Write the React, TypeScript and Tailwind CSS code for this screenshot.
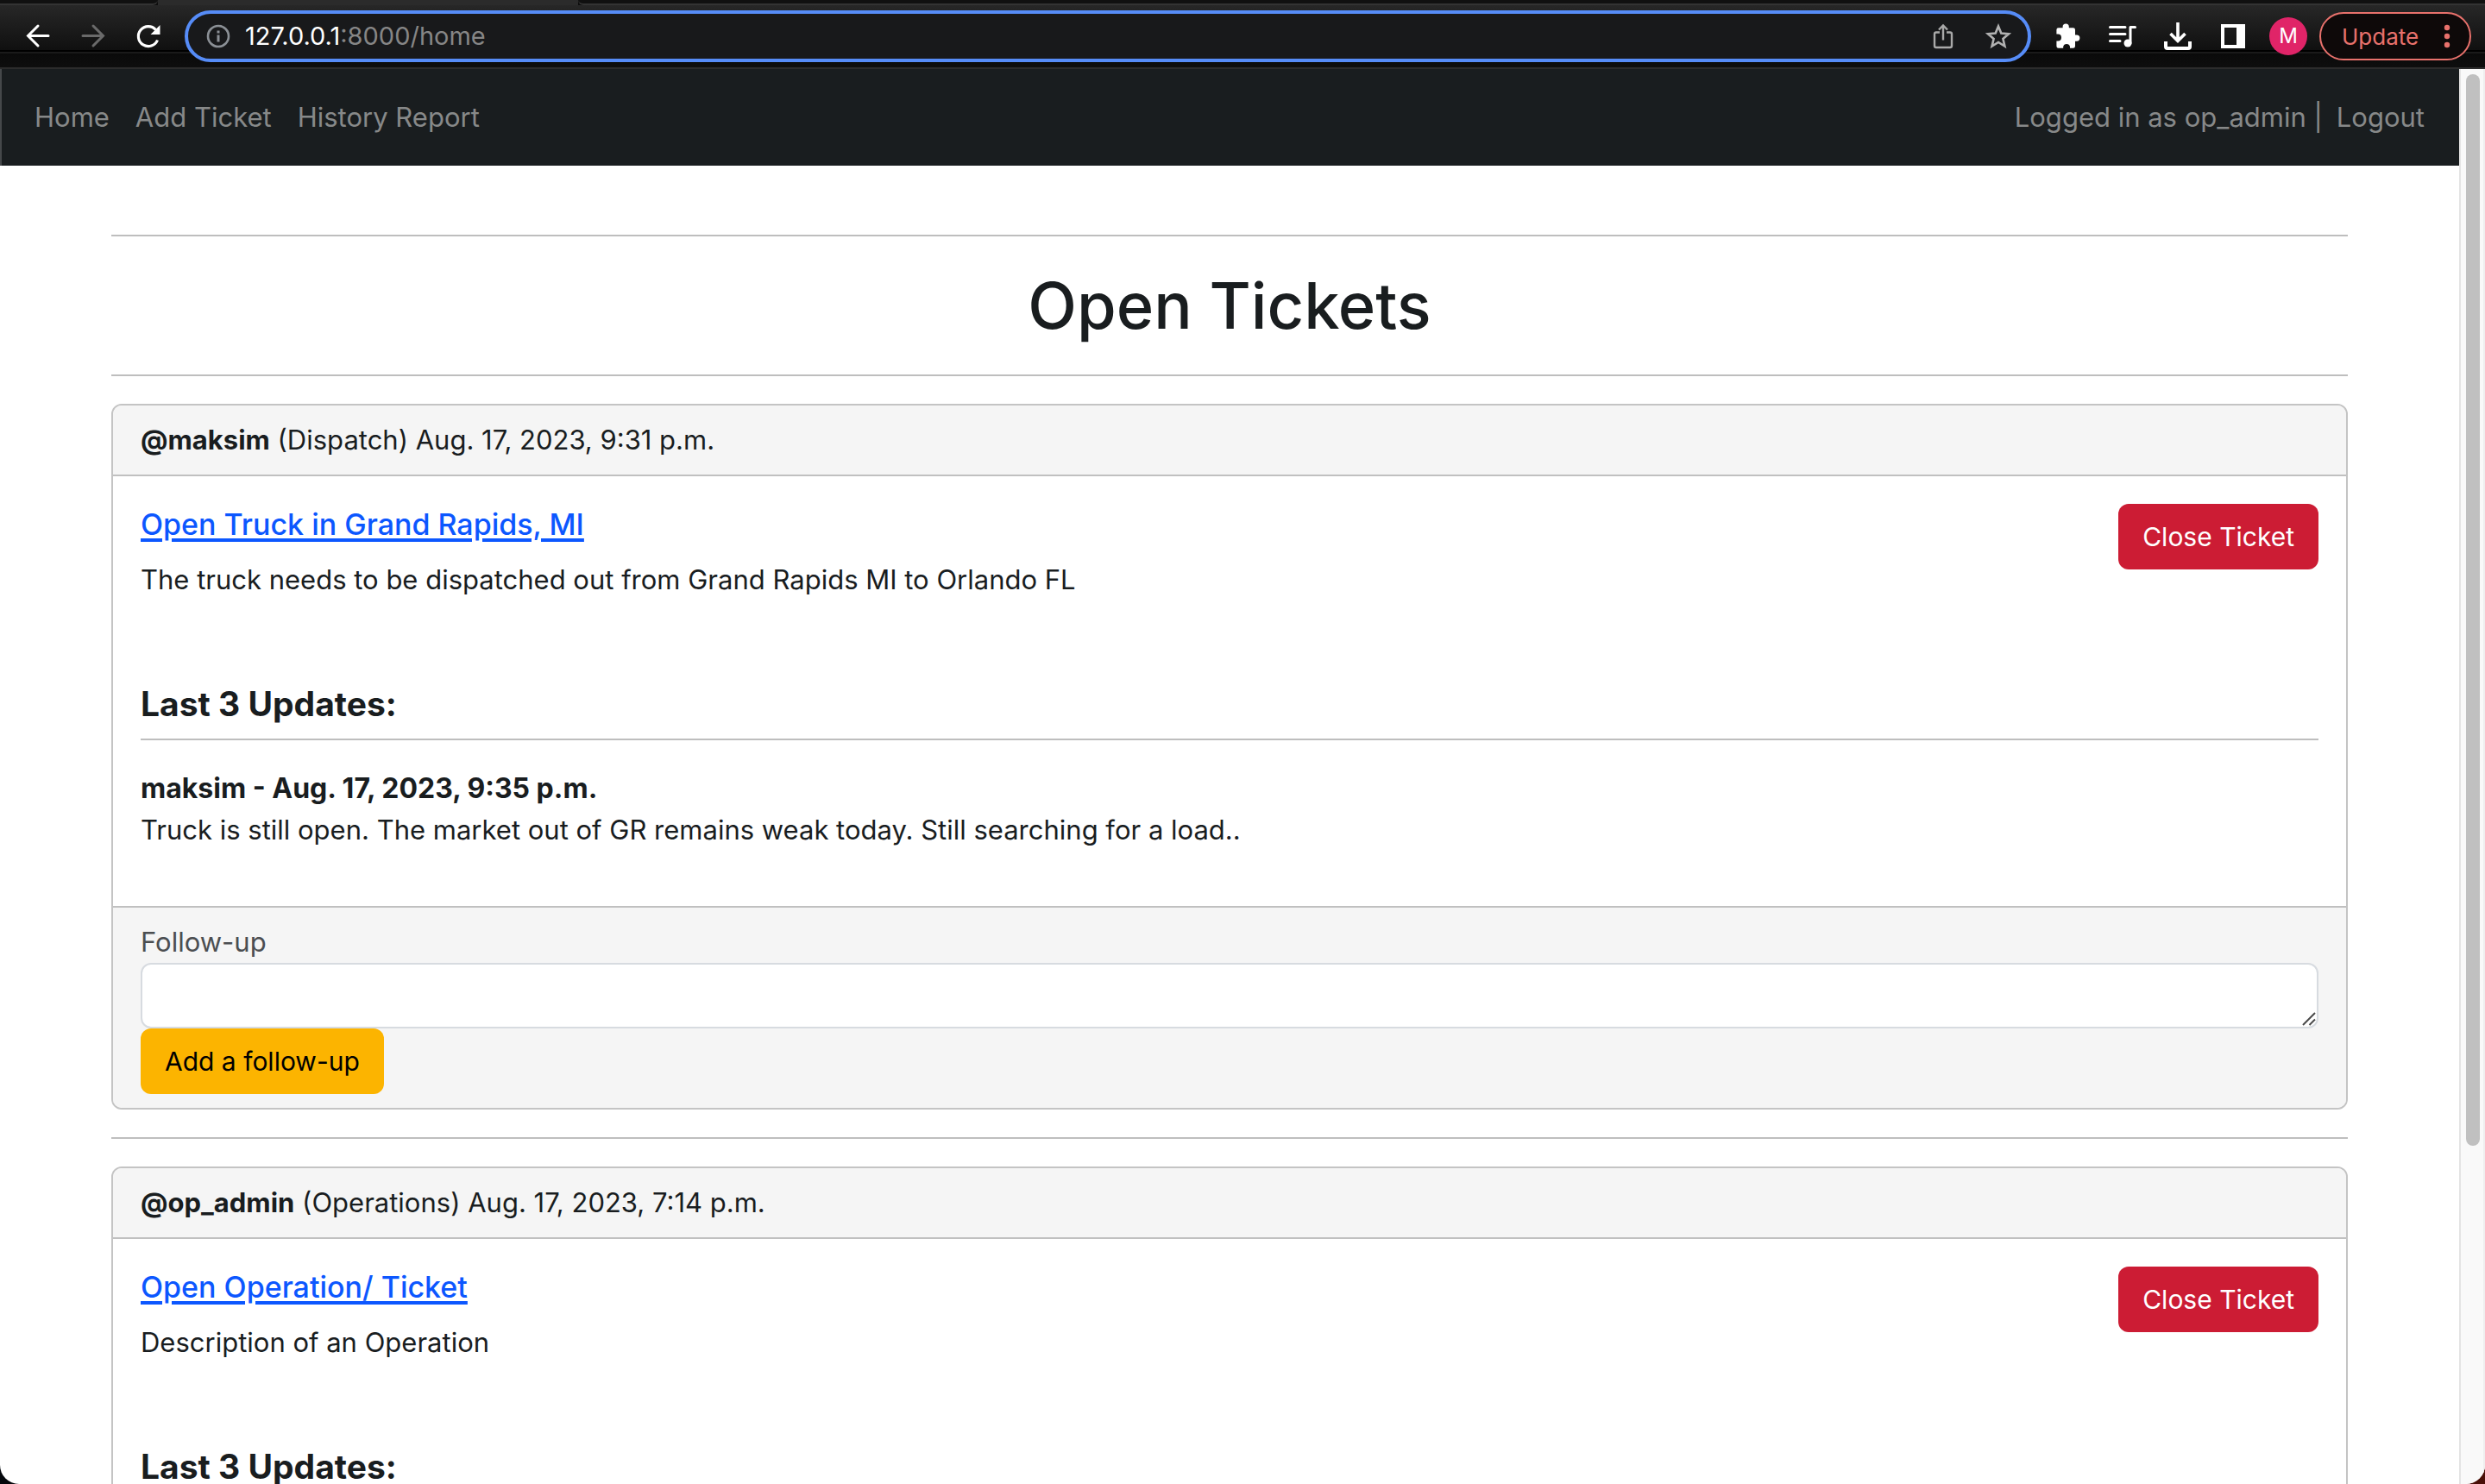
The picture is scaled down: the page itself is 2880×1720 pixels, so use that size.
import type { ReactNode } from 'react';

type Update = { author: string; date: string; text: string };
type Ticket = {
  id: number;
  user: string;
  department: string;
  date: string;
  title: string;
  description: string;
  updates: Update[];
};

const tickets: Ticket[] = [
  {
    id: 1,
    user: 'maksim',
    department: 'Dispatch',
    date: 'Aug. 17, 2023, 9:31 p.m.',
    title: 'Open Truck in Grand Rapids, MI',
    description: 'The truck needs to be dispatched out from Grand Rapids MI to Orlando FL',
    updates: [
      {
        author: 'maksim',
        date: 'Aug. 17, 2023, 9:35 p.m.',
        text: 'Truck is still open. The market out of GR remains weak today. Still searching for a load..',
      },
    ],
  },
  {
    id: 2,
    user: 'op_admin',
    department: 'Operations',
    date: 'Aug. 17, 2023, 7:14 p.m.',
    title: 'Open Operation/ Ticket',
    description: 'Description of an Operation',
    updates: [],
  },
];

function ToolButton({ label, className, children }: { label: string; className: string; children: ReactNode }) {
  return (
    <button type="button" aria-label={label} className={`flex h-11 w-16 shrink-0 items-center justify-center ${className}`}>
      <svg viewBox="0 0 32 32" className="h-8 w-8" fill="none" stroke="currentColor">
        {children}
      </svg>
    </button>
  );
}

function BrowserToolbar() {
  return (
    <header className="shrink-0 bg-[#0d0d0d]">
      <div className="flex h-[6px]">
        <div className="w-[183px] rounded-br-md border-b-2 border-[#333333] bg-[#101010]" />
        <div className="w-[487px] bg-[#2b2b2b]" />
        <div className="flex-1 rounded-bl-md border-b-2 border-[#333333] bg-[#101010]" />
      </div>
      <div className="flex h-[74px] items-center border-b-2 border-[#2c2c2c] bg-[linear-gradient(to_bottom,#272727_0px,#101010_52px,#000000_52px,#000000_54px,#1a1a1a_54px,#1a1a1a_56px,#0a0a0a_56px,#0e0e0e_72px)] pr-4 pl-3">
        <ToolButton label="Back" className="text-white">
          <path d="M28 15.5H5M16 4 4.500 15.500 16 27" strokeWidth="3" strokeLinecap="round" />
        </ToolButton>
        <ToolButton label="Forward" className="text-[#6a6a6a]">
          <path d="M4 15.500H27M16 4 27.500 15.500 16 27" strokeWidth="3" strokeLinecap="round" />
        </ToolButton>
        <ToolButton label="Reload" className="text-white">
          <path d="M26.500 20.500A11.500 11.500 0 1 1 24.500 8.500" strokeWidth="3.200" />
          <path d="M29.500 3V14H18.500Z" fill="currentColor" stroke="none" />
        </ToolButton>

        <div className="ml-[10px] flex h-[60px] flex-1 items-center rounded-full border-4 border-[#568cf7] bg-[#18191b] pr-[2px] pl-[19px]">
          <svg viewBox="0 0 32 32" className="h-8 w-8 shrink-0 text-[#8b9096]" fill="none" stroke="currentColor">
            <circle cx="16" cy="16" r="12" strokeWidth="2.600" />
            <path d="M16 14.500V22.500M16 9.500V12.500" strokeWidth="3" />
          </svg>
          <div className="ml-[15px] flex-1 text-[29px] leading-9 text-[#868686]">
            <span className="text-white">127.0.0.1</span>:8000/home
          </div>
          <ToolButton label="Share" className="text-[#a9a9a9]">
            <path d="M12 11.500H8Q6 11.500 6 13.500V27Q6 29 8 29H24Q26 29 26 27V13.500Q26 11.500 24 11.500H20" strokeWidth="2.400" />
            <path d="M16 20.500V4M11 8.500 16 3.500 21 8.500" strokeWidth="2.400" />
          </ToolButton>
          <ToolButton label="Bookmark" className="text-[#b2b2b2]">
            <path
              d="M16 4.500 19.300 12.600 28 13.300 21.400 19 23.400 27.500 16 23 8.600 27.500 10.600 19 4 13.300 12.700 12.600Z"
              strokeWidth="2.600"
            />
          </ToolButton>
        </div>

        <div className="ml-[10px] flex">
          <ToolButton label="Extensions" className="text-white">
            <path
              d="M26.800 14.500H25V8.500Q25 6.200 22.700 6.200H17.800V5A3.600 3.600 0 0 0 10.600 5V6.200H5.700Q3.400 6.200 3.400 8.500V13.500H5A4 4 0 0 1 5 21.500H3.400V27.500Q3.400 29.800 5.700 29.800H11.200V28A4 4 0 0 1 19 28V29.800H22.700Q25 29.800 25 27.500V21.700H26.800A3.600 3.600 0 0 0 26.800 14.500Z"
              fill="currentColor"
              stroke="none"
            />
          </ToolButton>
          <ToolButton label="Media controls" className="text-white">
            <path d="M1.500 5.500H19M1.500 13.500H19M1.500 21.500H13" strokeWidth="3" strokeLinecap="round" />
            <path d="M25 24V5.500H30.500" strokeWidth="3" strokeLinecap="round" strokeLinejoin="round" />
            <circle cx="22" cy="24" r="4.500" fill="currentColor" stroke="none" />
          </ToolButton>
          <ToolButton label="Downloads" className="text-white">
            <path d="M16 0V20M7.500 13 16 21.500 24.500 13" strokeWidth="3.600" />
            <path d="M2 22V28Q2 30 4 30H28Q30 30 30 28V22" strokeWidth="4" />
          </ToolButton>
          <ToolButton label="Side panel" className="text-white">
            <path d="M2 2H30V30H2ZM6 6V26H20V6Z" fill="currentColor" fillRule="evenodd" stroke="none" />
          </ToolButton>
        </div>
        <button
          type="button"
          aria-label="Profile M"
          className="ml-[10px] flex h-11 w-11 shrink-0 items-center justify-center rounded-full bg-[#e02468] text-[24px] text-white"
        >
          M
        </button>
        <button
          type="button"
          className="ml-[14px] flex h-14 w-44 shrink-0 items-center justify-between rounded-full border-2 border-[#e8716c] bg-[#0e0909] pr-[22px] pl-6 text-[26px] text-[#e8716c]"
        >
          Update
          <svg viewBox="0 0 8 28" className="h-7 w-2" fill="currentColor">
            <circle cx="4" cy="4" r="3.200" />
            <circle cx="4" cy="14" r="3.200" />
            <circle cx="4" cy="24" r="3.200" />
          </svg>
        </button>
      </div>
    </header>
  );
}

function Navbar() {
  return (
    <nav className="flex items-center justify-between border-l-2 border-[#45484a] bg-[#191d1f] py-8 pr-10 pl-[38px] text-[31px] leading-[48px] text-[#878989]">
      <div className="flex gap-[30px]">
        <a href="#home">Home</a>
        <a href="#add-ticket">Add Ticket</a>
        <a href="#history">History Report</a>
      </div>
      <div className="flex gap-4">
        <span>Logged in as op_admin |</span>
        <a href="#logout">Logout</a>
      </div>
    </nav>
  );
}

function TicketCard({ ticket }: { ticket: Ticket }) {
  const fieldId = `follow-up-${ticket.id}`;
  return (
    <article className="overflow-hidden rounded-xl border-2 border-[#c4c4c4]">
      <div className="border-b-2 border-[#c0c0c0] bg-[#f5f5f5] px-8 py-4">
        <strong>@{ticket.user}</strong> ({ticket.department}) {ticket.date}
      </div>
      <div className="p-8">
        <div className="flex items-start justify-between">
          <div>
            <h5 className="mb-4 text-[34px] leading-[48px] font-medium">
              <a href={`#ticket-${ticket.id}`} className="text-[#0c57ff] underline decoration-[4px] underline-offset-[4px]">
                {ticket.title}
              </a>
            </h5>
            <p>{ticket.description}</p>
          </div>
          <button type="button" className="rounded-xl bg-[#cc1c34] px-7 py-[14px] text-[30px] text-white">
            Close Ticket
          </button>
        </div>
        <h5 className="mt-24 text-[39px] leading-[48px] font-bold">Last 3 Updates:</h5>
        <hr className="mt-4 mb-8 border-t-2 border-[#bebebe]" />
        {ticket.updates.map((update) => (
          <div key={update.date}>
            <p className="text-[32px] font-bold">
              {update.author} - {update.date}
            </p>
            <p className="mb-8">{update.text}</p>
          </div>
        ))}
      </div>
      <form className="border-t-2 border-[#c0c0c0] bg-[#f5f5f5] px-8 py-4" onSubmit={(e) => e.preventDefault()}>
        <label htmlFor={fieldId} className="block text-[#4b4e51]">
          Follow-up
        </label>
        <div className="relative">
          <textarea
            id={fieldId}
            rows={1}
            className="block h-[76px] w-full resize-none rounded-xl border-2 border-[#d7dbe0] bg-white px-6 py-3"
          />
          <svg viewBox="0 0 16 16" className="absolute right-[3px] bottom-[3px] h-4 w-4" stroke="#4a4a4a" strokeWidth="2">
            <path d="M1 15 15 1M8.500 15 15 8.500" />
          </svg>
        </div>
        <button type="submit" className="block rounded-xl bg-[#fcb400] px-7 py-[14px] text-[30px] text-black">
          Add a follow-up
        </button>
      </form>
    </article>
  );
}

export default function App() {
  return (
    <div className="h-screen bg-[linear-gradient(to_right,#05080c,#4a0f08)] font-['Inter',sans-serif]">
      <div className="flex h-full flex-col overflow-hidden rounded-b-[22px] bg-white">
        <BrowserToolbar />
        <div className="flex min-h-0 flex-1">
          <div className="min-w-0 flex-1 overflow-hidden">
            <Navbar />
            <main className="mx-auto max-w-[2592px] pt-20 text-[31px] leading-[48px] text-[#191d1f]">
              <hr className="border-t-2 border-[#bebebe]" />
              <h1 className="my-8 text-center text-[74px] leading-[96px] font-medium">Open Tickets</h1>
              {tickets.map((ticket) => (
                <section key={ticket.id} className="mb-8">
                  <hr className="mb-8 border-t-2 border-[#bebebe]" />
                  <TicketCard ticket={ticket} />
                </section>
              ))}
            </main>
          </div>
          <div className="w-[30px] shrink-0 border-r-2 border-l-2 border-r-[#efefef] border-l-[#e4e4e4] bg-[#f9f9f9] px-[6px] pt-[6px]">
            <div className="h-[76%] w-4 rounded-full bg-[#c0c0c0]" />
          </div>
        </div>
      </div>
    </div>
  );
}
